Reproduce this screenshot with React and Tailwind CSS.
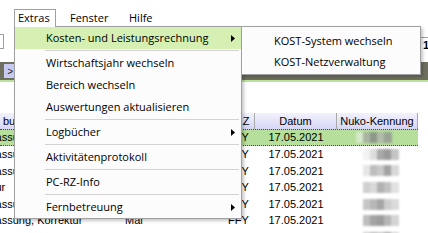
const ui = "font-['Open_Sans',sans-serif]";
const grid = "font-['Liberation_Sans',Arial,sans-serif]";

const menu = [
    { label: 'Kosten- und Leistungsrechnung', sub: true, active: true },
    'sep',
    { label: 'Wirtschaftsjahr wechseln' },
    { label: 'Bereich wechseln' },
    { label: 'Auswertungen aktualisieren' },
    'sep',
    { label: 'Logbücher', sub: true },
    'sep',
    { label: 'Aktivitätenprotokoll' },
    'sep',
    { label: 'PC-RZ-Info' },
    'sep',
    { label: 'Fernbetreuung', sub: true },
];

const rows = [
    { a: 'Anpassung', off: 'ml-[-24px]', sel: true, blur: ['bg-[#d6e8cc]', 'bg-[#a9b5a2]', 'bg-[#8f978a]', 'bg-[#b0bca8]', 'bg-[#9aa394]'] },
    { a: 'Anpassung', off: 'ml-[-24px]', blur: ['bg-[#f2f2f2]', 'bg-[#dcdcdc]', 'bg-[#a8a8a8]', 'bg-[#9a9a9a]', 'bg-[#c4c4c4]'] },
    { a: 'Anpassung', off: 'ml-[-24px]', blur: ['bg-[#e6e6e6]', 'bg-[#bdbdbd]', 'bg-[#c9c9c9]', 'bg-[#a3a3a3]', 'bg-[#d8d8d8]'] },
    { a: 'Korrektur', off: 'ml-[-40px]', blur: ['bg-[#cfcfcf]', 'bg-[#d9d9d9]', 'bg-[#b1b1b1]', 'bg-[#c2c2c2]', 'bg-[#e2e2e2]'] },
    { a: 'Anpassung', off: 'ml-[-24px]', blur: ['bg-[#c6c6c6]', 'bg-[#b8b8b8]', 'bg-[#a6a6a6]', 'bg-[#cdcdcd]', 'bg-[#dadada]'] },
    { a: 'Anpassung, Korrektur', off: 'ml-[-24px]', month: 'Mai', blur: ['bg-[#bdbdbd]', 'bg-[#a4a4a4]', 'bg-[#9c9c9c]', 'bg-[#b6b6b6]', 'bg-[#d4d4d4]'] },
    { a: 'Bilanz mit Bestand', off: 'ml-[-24px]', month: 'Mai', blur: ['bg-[#d0d0d0]', 'bg-[#bcbcbc]', 'bg-[#c8c8c8]', 'bg-[#aaaaaa]', 'bg-[#d8d8d8]'] },
];

function Arrow() {
    return (
        <svg width="4" height="7" viewBox="0 0 4 7">
            <path d="M0 0L4 3.5L0 7Z" fill="#000" />
        </svg>
    );
}

function Row({ row, index }) {
    const base = row.sel
        ? 'h-[17px] bg-[#b5df9a] border-y border-dotted border-[#4a4a4a]'
        : 'h-[16.6px]';
    return (
        <div className={`flex w-[418px] items-center text-[11px] text-black ${base}`}>
            <div className="w-[123px] overflow-hidden whitespace-nowrap">
                <span className={`inline-block ${row.off}`}>{row.a}</span>
            </div>
            <div className="w-[100px] pl-[2px]">{row.month}</div>
            <div className="w-[32px] pl-[5px]">FFY</div>
            <div className="w-[82px] text-center">17.05.2021</div>
            <div className="flex w-[81px] justify-center">
                <div className={`flex h-[11px] w-[36px] overflow-hidden blur-[1.2px] ${index === 0 ? '-ml-[8px]' : 'ml-[6px]'}`}>
                    {row.blur.map((c, i) => (
                        <div key={i} className={`h-full flex-1 ${c}`} />
                    ))}
                </div>
            </div>
        </div>
    );
}

export default function App() {
    return (
        <div className={`relative h-[233px] w-[428px] overflow-hidden bg-white ${grid}`}>
            <div className="h-[9px]" />

            {/* menu bar */}
            <div className={`flex h-[18px] items-center text-[11px] text-black ${ui}`}>
                <div className="relative z-20 ml-[14px] flex h-[18px] w-[42px] items-center border-x border-t border-[#a0a0a0] bg-white pl-[3px]">
                    Extras
                </div>
                <div className="w-[73px] pl-[14px]">Fenster</div>
                <div>Hilfe</div>
            </div>

            {/* form strip */}
            <div className="flex h-[35px] justify-between">
                <div className="mt-[7px] h-[15px] w-[4px] border-y border-r border-[#a0a0a0] bg-white" />
                <div className="mt-[10px] flex h-[16px] w-[8px] items-center border-l border-t border-[#a0a0a0] pl-[2px] text-[11px] font-bold">
                    1
                </div>
            </div>

            {/* dark tab bar */}
            <div className="flex h-[18px] bg-[#6f6f60]">
                <div className="ml-[4px] mt-[2px] flex h-[14px] w-[10px] items-center justify-end bg-[#cacaf0] pr-[1px] text-[10px] text-[#222]">
                    &gt;
                </div>
            </div>
            <div className="h-[2px] bg-[#b9e29a]" />
            <div className="h-[31px]" />

            {/* grid header */}
            <div className="flex h-[16px] w-[418px] items-center bg-linear-to-b from-[#f2f2fd] to-[#d6d6f5] text-[11px] text-black">
                <div className="w-[123px] pl-[3px]">buchung</div>
                <div className="w-[100px]" />
                <div className="flex h-full w-[32px] items-center border-r border-[#a8a8a8] pl-[5px]">BKZ</div>
                <div className="flex h-full w-[82px] items-center justify-center border-r border-[#a8a8a8]">Datum</div>
                <div className="flex h-full w-[81px] items-center justify-center border-r border-[#a8a8a8]">Nuko-Kennung</div>
            </div>

            {rows.map((r, i) => (
                <Row key={i} row={r} index={i} />
            ))}

            {/* dropdown menu */}
            <div className={`absolute left-[14px] top-[26px] z-10 w-[228px] border border-[#a0a0a0] bg-[#fcfcfc] text-[11px] text-black shadow-[2px_2px_3px_rgba(0,0,0,0.22)] ${ui}`}>
                {menu.map((m, i) =>
                    m === 'sep' ? (
                        <div key={i} className="flex h-[3px] items-center pl-[30px] pr-[2px]">
                            <div className="h-px w-full bg-[#d2d2d2]" />
                        </div>
                    ) : (
                        <div
                            key={i}
                            className={`flex h-[22px] items-center justify-between pl-[31px] pr-[6px] ${m.active ? 'bg-[#d5f0b2]' : ''}`}
                        >
                            <span>{m.label}</span>
                            {m.sub ? <Arrow /> : null}
                        </div>
                    )
                )}
            </div>

            {/* submenu */}
            <div className={`absolute left-[241px] top-[26px] z-10 w-[180px] border border-[#a0a0a0] bg-[#fcfcfc] pb-[1px] pt-[4px] text-[11px] text-black shadow-[2px_2px_3px_rgba(0,0,0,0.22)] ${ui}`}>
                <div className="flex h-[21px] items-center pl-[32px]">KOST-System wechseln</div>
                <div className="flex h-[21px] items-center pl-[32px]">KOST-Netzverwaltung</div>
            </div>
        </div>
    );
}
